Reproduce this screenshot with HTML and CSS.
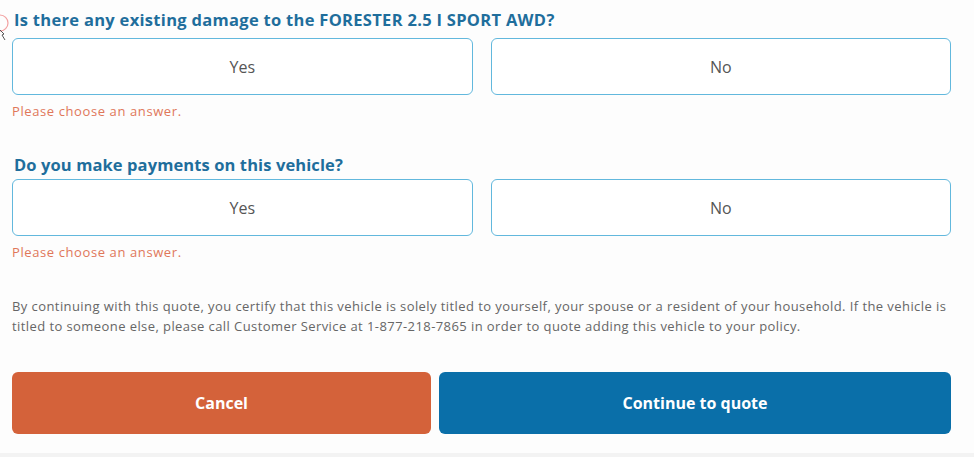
FILE: index.html
```html
<!DOCTYPE html>
<html lang="en">
<head>
<meta charset="utf-8">
<title>Vehicle questions</title>
<link rel="stylesheet" href="styles.css">
</head>
<body>
<div class="page">
  <div class="cursor" aria-hidden="true">
    <svg width="14" height="42" viewBox="0 0 14 42">
      <circle cx="0" cy="23" r="8" fill="none" stroke="#f2a0a0" stroke-width="1.2"/>
      <path d="M0 30 L4 34 L2 35 L5 40" fill="none" stroke="#555" stroke-width="1"/>
    </svg>
  </div>
  <section class="question">
    <h2 class="q-title">Is there any existing damage to the FORESTER 2.5 I SPORT AWD?</h2>
    <div class="options">
      <button class="option">Yes</button>
      <button class="option">No</button>
    </div>
    <p class="error">Please choose an answer.</p>
  </section>
  <section class="question second">
    <h2 class="q-title">Do you make payments on this vehicle?</h2>
    <div class="options">
      <button class="option">Yes</button>
      <button class="option">No</button>
    </div>
    <p class="error">Please choose an answer.</p>
  </section>
  <p class="notice">By continuing with this quote, you certify that this vehicle is solely titled to yourself, your spouse or a resident of your household. If the vehicle is titled to someone else, please call Customer Service at 1-877-218-7865 in order to quote adding this vehicle to your policy.</p>
  <div class="actions">
    <button class="btn cancel">Cancel</button>
    <button class="btn continue">Continue to quote</button>
  </div>
</div>
<div class="footer-band"></div>
</body>
</html>
```
FILE: styles.css
```css
html, body {
  margin: 0;
  padding: 0;
  background: #fdfdfd;
  font-family: "Open Sans", "Liberation Sans", sans-serif;
}
.page {
  position: relative;
  padding: 10px 23px 0 12px;
  height: 453px;
  box-sizing: border-box;
}
.cursor {
  position: absolute;
  left: 0;
  top: 0;
}
.q-title {
  margin: 0 0 8px 2px;
  font-size: 16.5px;
  line-height: 20px;
  font-weight: 700;
  letter-spacing: 0.3px;
  color: #1f6e9c;
}
.second {
  margin-top: 36px;
}
.second .q-title {
  margin-bottom: 4px;
  letter-spacing: 0.1px;
}
.options {
  display: grid;
  grid-template-columns: 1fr 1fr;
  gap: 18px;
}
.option {
  height: 57px;
  background: #fff;
  border: 1.5px solid #62b8dd;
  border-radius: 6px;
  font-family: inherit;
  font-size: 16px;
  color: #555;
}
.error {
  margin: 8px 0 0 0;
  font-size: 13px;
  line-height: 16px;
  letter-spacing: 0.6px;
  color: #e0775a;
}
.notice {
  margin: 36px 0 0 0;
  font-size: 13px;
  line-height: 20px;
  color: #666;
  letter-spacing: 0.42px;
}
.actions {
  margin-top: 36px;
  display: grid;
  grid-template-columns: 419fr 512fr;
  gap: 8px;
}
.btn {
  height: 62px;
  border: none;
  border-radius: 6px;
  font-family: inherit;
  font-size: 16px;
  font-weight: 700;
  color: #fff;
}
.cancel {
  background: #d4623a;
}
.continue {
  background: #0a6fa9;
}
.footer-band {
  height: 4px;
  background: #f3f3f3;
}
```
